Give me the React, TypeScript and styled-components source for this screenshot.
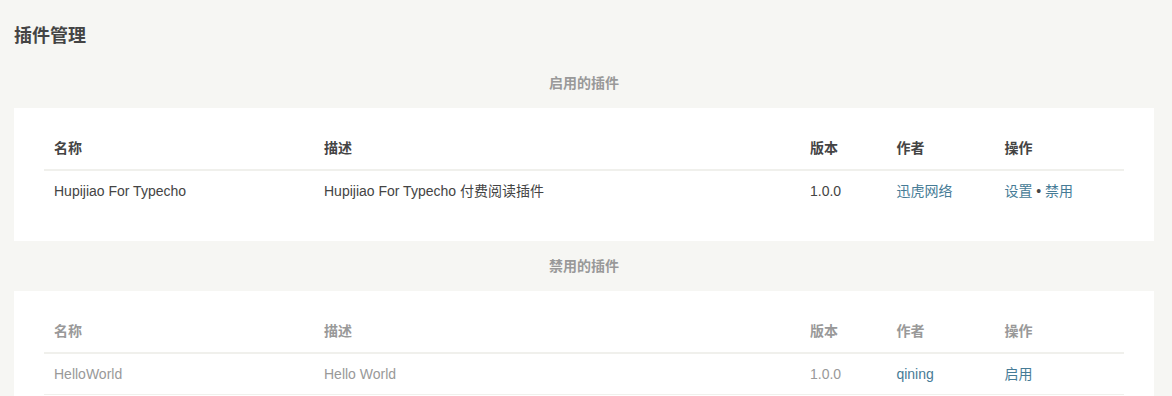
import React from 'react';
import styled, { createGlobalStyle, css } from 'styled-components';

interface Plugin {
  name: string;
  description: string;
  version: string;
  author: string;
  actions: string[];
}

interface MutedProps {
  $muted?: boolean;
}

const activated: Plugin[] = [
  {
    name: 'Hupijiao For Typecho',
    description: 'Hupijiao For Typecho 付费阅读插件',
    version: '1.0.0',
    author: '迅虎网络',
    actions: ['设置', '禁用'],
  },
];

const deactivated: Plugin[] = [
  {
    name: 'HelloWorld',
    description: 'Hello World',
    version: '1.0.0',
    author: 'qining',
    actions: ['启用'],
  },
];

const GlobalStyle = createGlobalStyle`
  body {
    margin: 0;
    background: #f6f6f3;
    color: #444;
    font-family: "Liberation Sans", "Noto Sans CJK SC", sans-serif;
    font-size: 14px;
  }
`;

function PluginTable({ plugins, muted }: { plugins: Plugin[]; muted?: boolean }) {
  return (
    <Panel>
      <Table $muted={muted}>
        <colgroup>
          <col width="25%" />
          <col width="45%" />
          <col width="8%" />
          <col width="10%" />
          <col width="12%" />
        </colgroup>
        <thead>
          <tr>
            <Th>名称</Th>
            <Th>描述</Th>
            <Th>版本</Th>
            <Th>作者</Th>
            <Th>操作</Th>
          </tr>
        </thead>
        <tbody>
          {plugins.map((p) => (
            <tr key={p.name}>
              <Td>{p.name}</Td>
              <Td>{p.description}</Td>
              <Td>{p.version}</Td>
              <Td>
                <Link href="#">{p.author}</Link>
              </Td>
              <Td>
                {p.actions.map((a, i) => (
                  <React.Fragment key={a}>
                    {i > 0 && <Dot> • </Dot>}
                    <Link href="#">{a}</Link>
                  </React.Fragment>
                ))}
              </Td>
            </tr>
          ))}
        </tbody>
      </Table>
    </Panel>
  );
}

export default function App() {
  return (
    <>
      <GlobalStyle />
      <Page>
        <Title>插件管理</Title>
        <SectionTitle>启用的插件</SectionTitle>
        <PluginTable plugins={activated} />
        <SectionTitle>禁用的插件</SectionTitle>
        <PluginTable plugins={deactivated} muted />
      </Page>
    </>
  );
}

const Page = styled.div`
  padding: 0 18px 40px 14px;
`;

const Title = styled.h2`
  margin: 0 0 25px;
  padding-top: 24px;
  font-size: 18px;
  line-height: 24px;
  font-weight: bold;
  color: #444;
`;

const SectionTitle = styled.h4`
  margin: 15px 0;
  text-align: center;
  font-size: 14px;
  line-height: 20px;
  font-weight: bold;
  color: #999;
`;

const Panel = styled.div`
  background: #fff;
  padding: 24px 30px 30px;
`;

const Th = styled.th`
  text-align: left;
  padding: 6px 10px 10px;
  line-height: 21px;
  font-weight: bold;
  border-bottom: 2px solid #f0f0ec;
`;

const Td = styled.td`
  padding: 10px;
  line-height: 20px;
`;

const Table = styled.table<MutedProps>`
  width: 100%;
  border-collapse: collapse;
  table-layout: fixed;
  color: #444;

  ${(props) =>
    props.$muted &&
    css`
      color: #999;

      ${Td} {
        border-bottom: 1px solid #f0f0ec;
      }
    `}
`;

const Link = styled.a`
  color: #467b96;
  text-decoration: none;
`;

const Dot = styled.span`
  color: #444;
`;
